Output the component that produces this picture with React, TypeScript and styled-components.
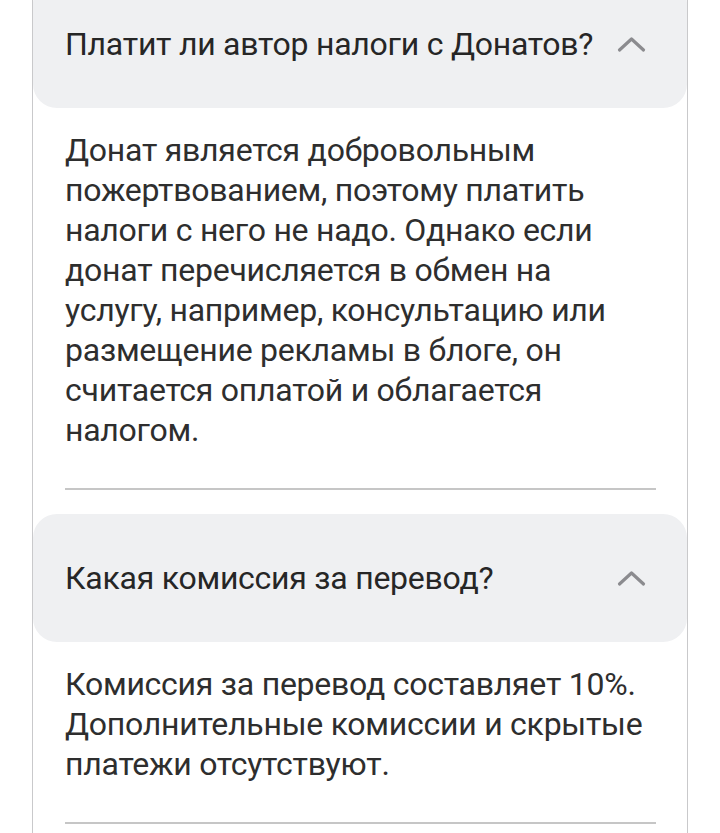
import styled, { createGlobalStyle } from "styled-components";

interface FaqEntry {
  question: string;
  answer: string;
}

const faq: FaqEntry[] = [
  {
    question: "Платит ли автор налоги с Донатов?",
    answer:
      "Донат является добровольным пожертвованием, поэтому платить налоги с него не надо. Однако если донат перечисляется в обмен на услугу, например, консультацию или размещение рекламы в блоге, он считается оплатой и облагается налогом.",
  },
  {
    question: "Какая комиссия за перевод?",
    answer:
      "Комиссия за перевод составляет 10%. Дополнительные комиссии и скрытые платежи отсутствуют.",
  },
];

const GlobalStyle = createGlobalStyle`
  html, body {
    margin: 0;
    padding: 0;
    background: #ffffff;
    overflow: hidden;
  }
  body {
    font-family: Roboto, "Noto Sans", sans-serif;
    -webkit-font-smoothing: antialiased;
  }
`;

const Page = styled.div`
  width: 720px;
  height: 833px;
  overflow: hidden;
`;

const Card = styled.div`
  width: 656px;
  margin: -20px 0 0 32px;
  box-sizing: border-box;
  border-left: 1px solid #c9c9cb;
  border-right: 1px solid #c9c9cb;
  padding-bottom: 40px;
`;

const Item = styled.section`
  display: flex;
  flex-direction: column;
`;

const Header = styled.div`
  height: 128px;
  display: flex;
  align-items: center;
  justify-content: space-between;
  padding: 0 41px 0 32px;
  background: #eff0f2;
  border-radius: 24px;
`;

const Question = styled.h3`
  margin: 0;
  font-size: 32px;
  font-weight: 400;
  line-height: 40px;
  letter-spacing: -0.25px;
  color: #262626;
`;

const Answer = styled.p`
  margin: 0;
  padding: 22px 32px 0;
  font-size: 32px;
  line-height: 40px;
  letter-spacing: -0.25px;
  color: #2e2e2e;
`;

const Divider = styled.hr`
  border: 0;
  height: 2px;
  margin: 38px 31px 24px 32px;
  background: #c6c6c6;
`;

const Chevron = () => (
  <svg width="29" height="17" viewBox="0 0 29 17" fill="none">
    <path
      d="M2.5 14 L14.5 3 L26.5 14"
      stroke="#8b8b8f"
      strokeWidth="3.2"
      strokeLinecap="round"
      strokeLinejoin="round"
    />
  </svg>
);

const App = () => {
  return (
    <Page>
      <GlobalStyle />
      <Card>
        {faq.map((entry) => (
          <Item key={entry.question}>
            <Header>
              <Question>{entry.question}</Question>
              <Chevron />
            </Header>
            <Answer>{entry.answer}</Answer>
            <Divider />
          </Item>
        ))}
      </Card>
    </Page>
  );
};

export default App;
